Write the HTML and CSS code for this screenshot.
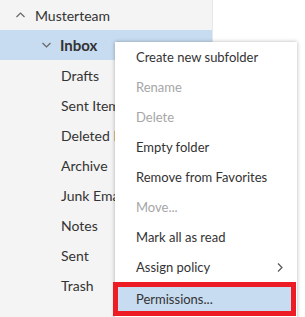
FILE: index.html
```html
<!DOCTYPE html>
<html>
<head>
<meta charset="utf-8">
<link rel="stylesheet" href="styles.css">
</head>
<body>
<div class="app">
  <div class="pane">
    <div class="row level0">
      <svg class="caret" width="9" height="6" viewBox="0 0 9 6"><path d="M0.5 5 L4.5 1 L8.5 5" fill="none" stroke="#666" stroke-width="1.2"/></svg>
      <span>Musterteam</span>
    </div>
    <div class="row level1 selected">
      <svg class="caret" width="9" height="6" viewBox="0 0 9 6"><path d="M0.5 1 L4.5 5 L8.5 1" fill="none" stroke="#666" stroke-width="1.2"/></svg>
      <span>Inbox</span>
    </div>
    <div class="row level2">Drafts</div>
    <div class="row level2">Sent Items</div>
    <div class="row level2">Deleted Items</div>
    <div class="row level2">Archive</div>
    <div class="row level2">Junk Email</div>
    <div class="row level2">Notes</div>
    <div class="row level2">Sent</div>
    <div class="row level2">Trash</div>
  </div>
  <div class="main"></div>
  <div class="menu">
    <div class="item">Create new subfolder</div>
    <div class="item disabled">Rename</div>
    <div class="item disabled">Delete</div>
    <div class="item">Empty folder</div>
    <div class="item">Remove from Favorites</div>
    <div class="item disabled">Move...</div>
    <div class="item">Mark all as read</div>
    <div class="item sub">Assign policy
      <svg class="chev" width="6" height="9" viewBox="0 0 6 9"><path d="M1 0.5 L5 4.5 L1 8.5" fill="none" stroke="#555" stroke-width="1.2"/></svg>
    </div>
    <div class="item highlight">Permissions...</div>
  </div>
</div>
</body>
</html>
```
FILE: styles.css
```css
html, body {
  margin: 0;
  padding: 0;
  width: 305px;
  height: 317px;
  overflow: hidden;
  background: #fff;
}
.app {
  position: relative;
  display: flex;
  width: 305px;
  height: 317px;
  font-family: Lato, "Open Sans", sans-serif;
  font-size: 13px;
  color: #333;
}
.pane {
  width: 212px;
  height: 317px;
  background: #f4f4f4;
  border-right: 1px solid #e8e8e8;
  flex-shrink: 0;
}
.main {
  flex: 1;
  background: #fff;
}
.row {
  height: 30px;
  display: flex;
  align-items: center;
  white-space: nowrap;
  font-size: 14px;
  color: #333;
}
.row.level0 {
  padding-left: 16px;
}
.row.level0 .caret {
  margin-right: 10px;
}
.row.level1 {
  padding-left: 42px;
  font-weight: 700;
  font-size: 15px;
}
.row.level1 .caret {
  margin-right: 9px;
}
.row.level2 {
  padding-left: 61px;
}
.selected {
  background: #c7dcf0;
}
.menu {
  position: absolute;
  left: 115px;
  top: 42px;
  width: 182px;
  background: #fff;
  box-shadow: 0 0 4px rgba(0,0,0,0.3);
  padding-bottom: 4px;
}
.item {
  height: 30px;
  display: flex;
  align-items: center;
  padding-left: 21px;
  padding-right: 12px;
  font-size: 13px;
  color: #333;
  white-space: nowrap;
}
.item.disabled {
  color: #a6a6a6;
}
.item.sub {
  justify-content: space-between;
}
.chev {
  margin-right: 2px;
}
.item.highlight {
  background: #c7dcf0;
  margin-left: -2px;
  margin-right: 1px;
  padding-left: 18px;
  border: 5px solid #ed1c24;
  height: 24px;
}
```
